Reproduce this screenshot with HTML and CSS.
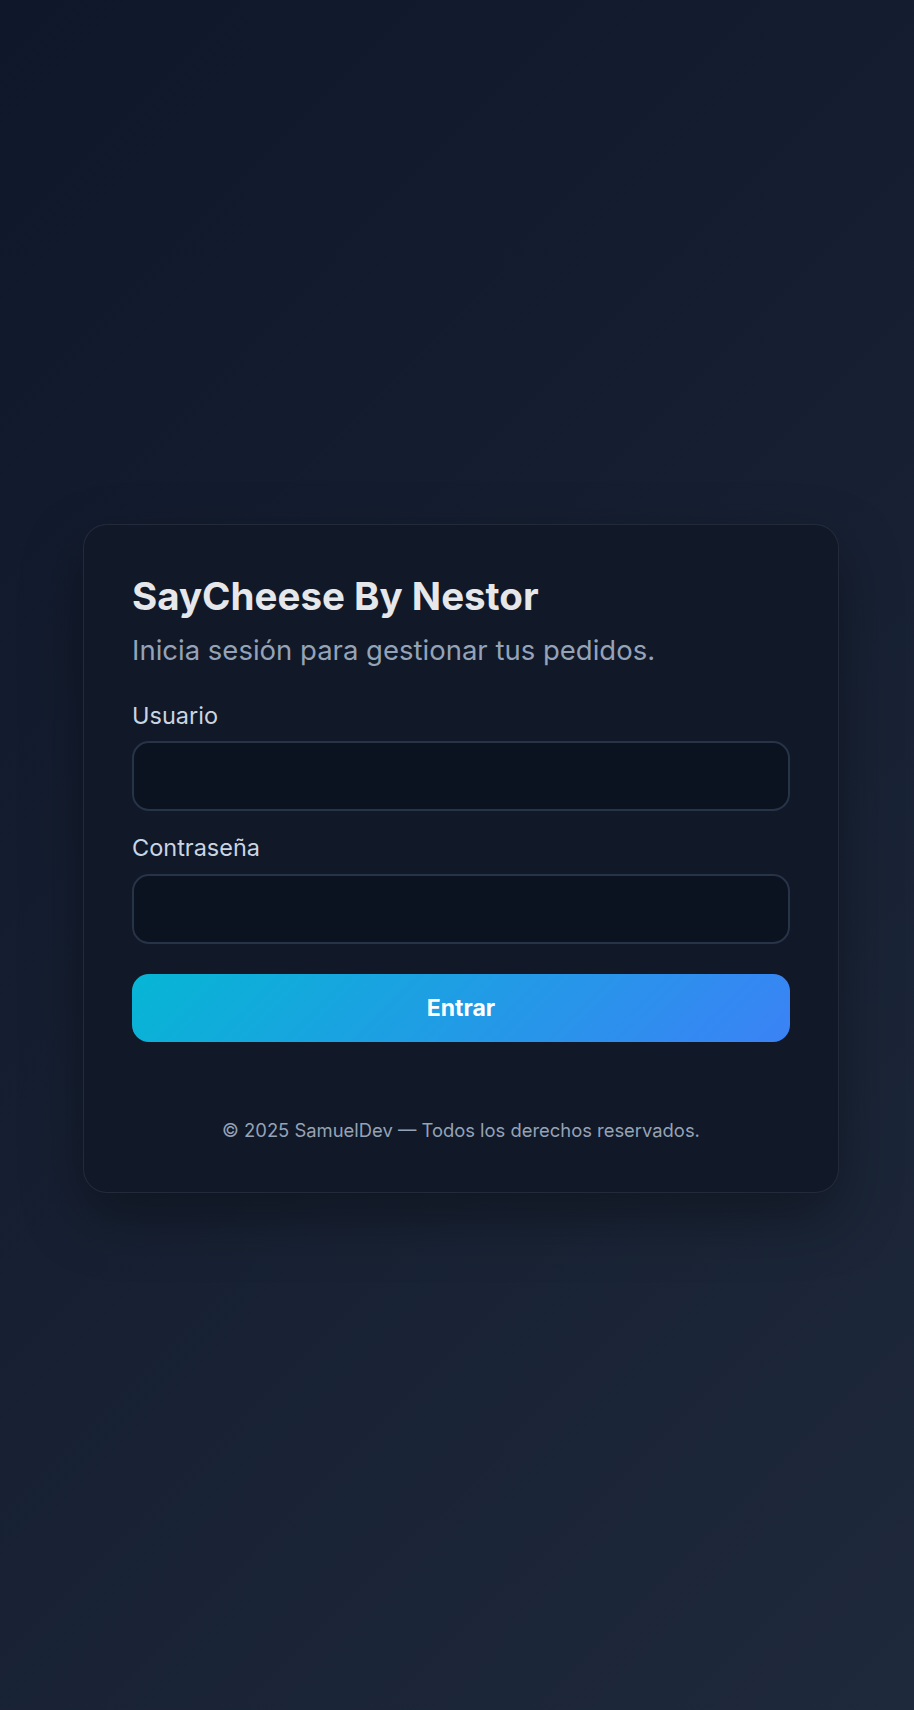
FILE: index.html
```html
<!DOCTYPE html>
<html lang="es">
<head>
    <meta charset="utf-8">
    <title>SayCheese By Nestor - Login</title>
    <link rel="stylesheet" href="styles.css">
</head>
<body>
    <main class="page">
        <div class="login-card">
            <h1 class="login-title">SayCheese By Nestor</h1>
            <p class="login-subtitle">Inicia sesión para gestionar tus pedidos.</p>

            <form class="login-form" onsubmit="return false;">
                <label class="field-label" for="usuario">Usuario</label>
                <input class="field-input" type="text" id="usuario" name="usuario">

                <label class="field-label" for="password">Contraseña</label>
                <input class="field-input" type="password" id="password" name="password">

                <button class="login-button" type="submit">Entrar</button>
            </form>

            <footer class="login-footer">© 2025 SamuelDev — Todos los derechos reservados.</footer>
        </div>
    </main>
</body>
</html>
```

FILE: styles.css
```css
* {
    box-sizing: border-box;
}

html, body {
    margin: 0;
    padding: 0;
}

body {
    font-family: Inter, "Noto Sans", Arial, sans-serif;
    background: linear-gradient(135deg, #0f172a, #1e293b);
    min-height: 100vh;
    color: #e5e7eb;
}

.page {
    min-height: 100vh;
    display: flex;
    align-items: center;
    padding: 7px 0 0 83px;
}

.login-card {
    width: 756px;
    background: #111827;
    border: 1px solid rgba(148, 163, 184, 0.14);
    border-radius: 24px;
    padding: 48px;
    box-shadow: 0 24px 60px rgba(0, 0, 0, 0.35);
}

.login-title {
    margin: 0 0 11px;
    font-size: 38.5px;
    line-height: 1.2;
    font-weight: 700;
    color: #e5e7eb;
}

.login-subtitle {
    margin: 0 0 27px;
    font-size: 27.5px;
    line-height: 1.5;
    color: #94a3b8;
}

.login-form {
    display: flex;
    flex-direction: column;
}

.field-label {
    font-size: 23.5px;
    line-height: 1.5;
    color: #cbd5e1;
    margin-bottom: 8px;
}

.field-input {
    height: 70px;
    width: 100%;
    background: #0b1220;
    border: 2px solid #273346;
    border-radius: 17px;
    padding: 0 20px;
    font-family: inherit;
    font-size: 22px;
    color: #e5e7eb;
    outline: none;
    margin-bottom: 19px;
}

.field-input:focus {
    border-color: #3b82f6;
}

.login-button {
    margin-top: 11px;
    height: 68px;
    border: none;
    border-radius: 17px;
    background: linear-gradient(135deg, #06b6d4, #3b82f6);
    color: #fff;
    font-family: inherit;
    font-size: 23px;
    font-weight: 700;
    cursor: pointer;
}

.login-footer {
    margin-top: 75px;
    text-align: center;
    font-size: 18.4px;
    line-height: 1.5;
    color: #94a3b8;
}
```
